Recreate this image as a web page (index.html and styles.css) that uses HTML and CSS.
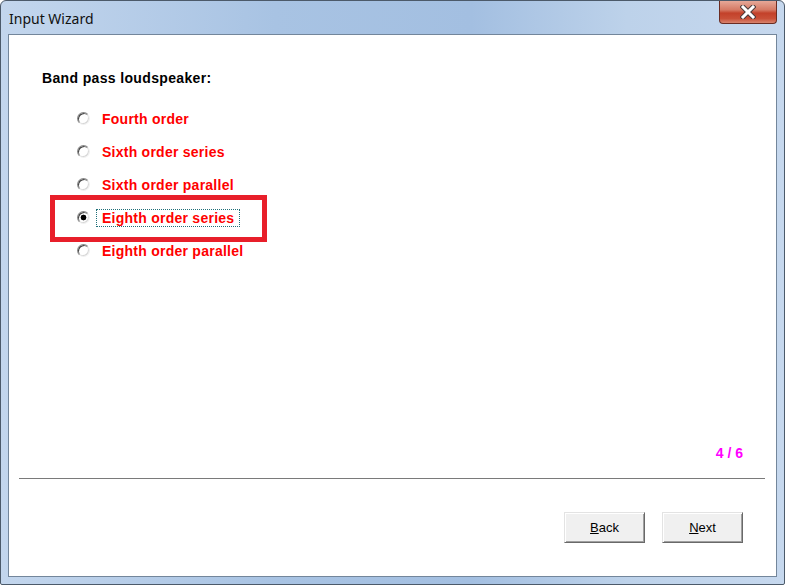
FILE: index.html
```html
<!DOCTYPE html>
<html lang="en">
<head>
    <meta charset="UTF-8">
    <title>Input Wizard</title>
    <link rel="stylesheet" href="styles.css">
</head>
<body>

    <div class="window">
        <!-- Titelleiste -->
        <div class="titlebar">
            <span class="title">Input Wizard</span>
            <div class="close">
                <svg width="16" height="14" viewBox="0 0 16 14">
                    <path d="M3 2 L13 12 M13 2 L3 12" stroke="#4a3a3a" stroke-width="5" stroke-linecap="square"/>
                    <path d="M3 2 L13 12 M13 2 L3 12" stroke="#fff" stroke-width="3" stroke-linecap="square"/>
                </svg>
            </div>
        </div>

        <div class="client">
            <div class="heading">Band pass loudspeaker:</div>

            <div class="options">
                <div class="option"><span class="radio"></span><span class="label">Fourth order</span></div>
                <div class="option"><span class="radio"></span><span class="label">Sixth order series</span></div>
                <div class="option"><span class="radio"></span><span class="label">Sixth order parallel</span></div>
                <div class="option">
                    <span class="radio checked"></span><span class="label focus">Eighth order series</span>
                    <div class="mark"></div>
                </div>
                <div class="option"><span class="radio"></span><span class="label">Eighth order parallel</span></div>
            </div>

            <div class="footer">
                <div class="counter">4 / 6</div>
                <div class="separator"></div>
                <div class="buttons">
                    <button><u>B</u>ack</button>
                    <button><u>N</u>ext</button>
                </div>
            </div>
        </div>
    </div>

</body>
</html>
```

FILE: styles.css
```css
body {
    margin: 0;
    background: #fff;
}

/* Fensterrahmen im Aero-Stil */
.window {
    width: 785px;
    height: 585px;
    box-sizing: border-box;
    border: 1px solid #4c5a6a;
    border-radius: 6px 6px 2px 2px;
    background: linear-gradient(to right, #c3d6ed, #a8c3e3 35%, #a3bfe1 60%, #bdd2ea 80%, #c6d8ee);
    display: flex;
    flex-direction: column;
}

.titlebar {
    height: 33px;
    display: flex;
    justify-content: space-between;
    align-items: flex-start;
    padding-left: 8px;
}

.title {
    margin-top: 8px;
    font-family: "Noto Sans", sans-serif;
    font-size: 14px;
    line-height: 19px;
    color: #111;
}

.close {
    width: 58px;
    height: 23px;
    box-sizing: border-box;
    margin-right: 7px;
    border: 1px solid #6b2c22;
    border-top: none;
    border-radius: 0 0 4px 4px;
    background: linear-gradient(to bottom, #e6a898, #d57a65 40%, #c3412a 55%, #c95038 80%, #d8846e);
    display: flex;
    justify-content: center;
    align-items: center;
}

/* Weisser Inhaltsbereich */
.client {
    flex: 1;
    margin: 0 7px 7px 7px;
    border: 1px solid #73869b;
    background: #fff;
    display: flex;
    flex-direction: column;
    font-family: "Liberation Sans", Arial, sans-serif;
}

.heading {
    padding: 35px 0 0 33px;
    font-size: 14px;
    line-height: 16px;
    font-weight: bold;
    letter-spacing: 0.35px;
    color: #000;
}

.options {
    margin: 16px 0 0 68px;
}

.option {
    position: relative;
    height: 33px;
    display: flex;
    align-items: center;
    width: 190px;
}

.radio {
    width: 13px;
    height: 13px;
    box-sizing: border-box;
    border-radius: 50%;
    border: 1px solid;
    border-color: #8a8a8a #f0f0f0 #f0f0f0 #8a8a8a;
    box-shadow: inset 1px 1px #444, inset -1px -1px #d8d8d8;
    background: #fff;
}

.radio.checked {
    background: radial-gradient(circle, #000 0 2.6px, #fff 3.2px);
}

.label {
    margin-left: 6px;
    padding: 0 5px;
    border: 1px dotted transparent;
    font-size: 14px;
    line-height: 16px;
    font-weight: bold;
    letter-spacing: 0.25px;
    color: #ff0000;
}

.label.focus {
    border-color: #1f6f78;
}

/* Rote Markierung um die gewaehlte Option */
.mark {
    position: absolute;
    left: -27px;
    top: -6px;
    width: 217px;
    height: 47px;
    box-sizing: border-box;
    border: 5px solid #e81f2a;
}

.footer {
    margin-top: auto;
}

.counter {
    padding-right: 33px;
    text-align: right;
    font-size: 14px;
    line-height: 16px;
    font-weight: bold;
    color: #ff00ff;
}

.separator {
    margin: 17px 11px 0 10px;
    border-top: 1px solid #7a7a7a;
}

.buttons {
    display: flex;
    justify-content: flex-end;
    gap: 17px;
    padding-right: 33px;
    margin: 33px 0 33px 0;
}

button {
    width: 81px;
    height: 31px;
    padding: 0;
    background: #f0f0f0;
    border: 1px solid;
    border-color: #e3e3e3 #696969 #696969 #e3e3e3;
    box-shadow: inset 1px 1px #fff, inset -1px -1px #a0a0a0;
    font-family: "Liberation Sans", Arial, sans-serif;
    font-size: 13px;
    color: #000;
}
```
